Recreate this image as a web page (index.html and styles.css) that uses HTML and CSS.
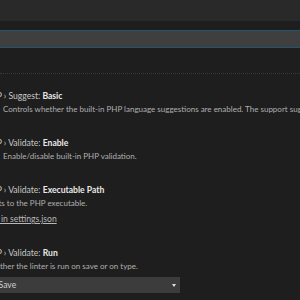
FILE: index.html
```html
<!DOCTYPE html>
<html lang="en">
<head>
  <meta charset="UTF-8" />
  <title>Settings</title>
  <link rel="stylesheet" href="styles.css">
</head>
<body>
  <div class="tabs"></div>
  <div class="search-row">
    <div class="search-box"></div>
  </div>
  <div class="header-line"></div>

  <div class="settings">
    <div class="setting">
      <div class="title">PHP › Suggest: <b>Basic</b></div>
      <div class="check-row">
        <span class="checkbox"></span>
        <span class="desc">Controls whether the built-in PHP language suggestions are enabled. The support suggests PHP globals and variables.</span>
      </div>
    </div>

    <div class="setting">
      <div class="title">PHP › Validate: <b>Enable</b></div>
      <div class="check-row">
        <span class="checkbox"></span>
        <span class="desc">Enable/disable built-in PHP validation.</span>
      </div>
    </div>

    <div class="setting">
      <div class="title">PHP › Validate: <b>Executable Path</b></div>
      <div class="desc">Points to the PHP executable.</div>
      <a class="edit-link" href="#">Edit in settings.json</a>
    </div>

    <div class="setting">
      <div class="title">PHP › Validate: <b>Run</b></div>
      <div class="desc">Whether the linter is run on save or on type.</div>
      <div class="select">
        <span>onSave</span>
        <span class="arrow"></span>
      </div>
    </div>
  </div>
</body>
</html>
```

FILE: styles.css
```css
body {
  margin: 0;
  background: #1e1e1e;
  font-family: Lato, sans-serif;
  font-size: 8.6px;
  overflow: hidden;
}

.tabs {
  height: 21px;
  background: #292929;
}

.search-row {
  padding-top: 9px;
}

.search-box {
  height: 16px;
  background: #3f3f3f;
  border-top: 1px solid #245373;
  border-bottom: 1px solid #245373;
}

.header-line {
  margin-top: 25px;
  border-top: 1px dotted #3a3a3a;
}

.settings {
  margin-left: -17px;
  padding-top: 16px;
}

.setting {
  padding-bottom: 21px;
}

.title {
  padding-left: 2px;
  line-height: 13px;
  color: #c8c8c8;
  white-space: nowrap;
}

.title b {
  color: #e8e8e8;
  font-weight: 700;
}

.check-row {
  display: flex;
  align-items: center;
  gap: 8px;
  white-space: nowrap;
}

.checkbox {
  width: 12px;
  height: 12px;
  flex: none;
  background: #3c3c3c;
  border-radius: 2px;
}

.desc {
  font-size: 8px;
  line-height: 13px;
  color: #b0b0b0;
  white-space: nowrap;
}

.edit-link {
  display: block;
  margin-top: 3px;
  margin-left: 1px;
  line-height: 13px;
  color: #b8b8b8;
}

.select {
  margin-top: 4px;
  width: 197px;
  height: 16px;
  background: #3c3c3c;
  display: flex;
  align-items: center;
  justify-content: space-between;
  padding: 0 4px 0 6px;
  box-sizing: border-box;
  color: #d0d0d0;
}

.arrow {
  width: 0;
  height: 0;
  border-left: 2px solid transparent;
  border-right: 2px solid transparent;
  border-top: 3px solid #e0e0e0;
}
```
